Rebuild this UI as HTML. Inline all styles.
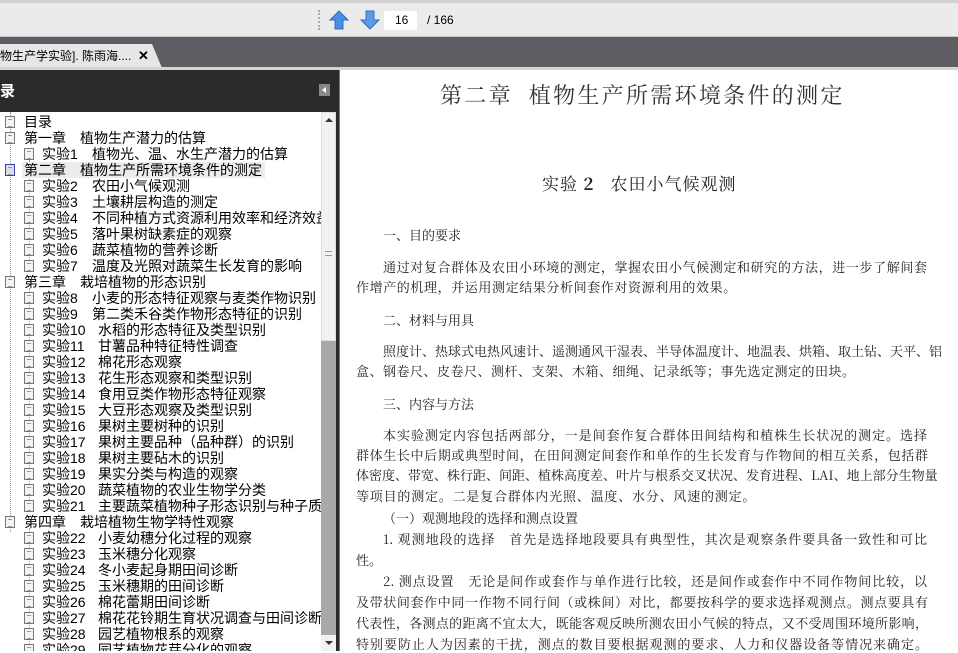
<!DOCTYPE html>
<html><head><meta charset="utf-8"><style>
*{margin:0;padding:0;box-sizing:border-box}
body{width:958px;height:651px;overflow:hidden;position:relative;background:#fff;font-family:"Liberation Sans","Noto Sans CJK SC",sans-serif}
.abs{position:absolute;white-space:nowrap}
#tb{left:0;top:0;width:958px;height:37px;background:#ebebeb;border-top:3px solid #d0d0d0;border-bottom:1px solid #c8c8c8}
#tabs{left:0;top:37px;width:958px;height:31px;background:#5e5d63}
#tab{left:0;top:44px;width:152px;height:24px;background:#e6e6e6;font-size:12px;line-height:24px;color:#000}
#tabedge{left:152px;top:44px;width:0;height:0;border-left:10px solid #e6e6e6;border-top:24px solid transparent}
#line2{left:0;top:67px;width:958px;height:3px;background:#d4d4d4}
#ph{left:0;top:70px;width:339px;height:42px;background:#2b2b2b}
#tree{left:0;top:112px;width:321px;height:539px;background:#fff;overflow:hidden}
.r{position:absolute;left:0;width:321px;height:16px;font-size:14px;line-height:16px;color:#000;white-space:nowrap}
.r span{position:absolute;top:0}
.ic{position:absolute;width:10px;height:12px;border:1px solid #777;background:#f4f4f4}
.ic::after{content:"";position:absolute;left:2px;top:2px;width:4px;height:6px;border-top:1px solid #999;border-bottom:1px solid #999}
.dl{position:absolute;border-left:1px dotted #999;}
#sb{left:321px;top:112px;width:15px;height:539px;background:#a9a9a9}
#doc{left:339px;top:70px;width:619px;height:581px;background:#fff;border-left:1px solid #777}
.p{position:absolute;font-family:"Noto Serif CJK SC","Liberation Serif",serif;font-size:13px;color:#222;white-space:nowrap;line-height:16px}
.j{text-align:justify;text-align-last:justify;width:572px;left:356px}
</style></head><body>
<div id="tb" class="abs"></div>
<div class="abs" style="left:318px;top:10px;width:2px;height:20px;border-left:2px dotted #aaa"></div>
<svg class="abs" style="left:328px;top:9px" width="22" height="22" viewBox="0 0 22 22"><path d="M11 2 L20 11 L15 11 L15 20 L7 20 L7 11 L2 11 Z" fill="#4a8fe6" stroke="#2f6cc0"/></svg>
<svg class="abs" style="left:359px;top:9px" width="22" height="22" viewBox="0 0 22 22"><path d="M11 20 L20 11 L15 11 L15 2 L7 2 L7 11 L2 11 Z" fill="#5b9ae8" stroke="#2f6cc0"/></svg>
<div class="abs" style="left:384px;top:11px;width:33px;height:19px;background:#fff;font-size:12px;line-height:19px;padding-left:11px">16</div>
<div class="abs" style="left:427px;top:11px;font-size:12px;line-height:19px">/ 166</div>
<div id="tabs" class="abs"></div>
<div id="tab" class="abs">物生产学实验]. 陈雨海....<span class="abs" style="left:138px;top:0;font-size:13px;font-weight:bold">✕</span></div>
<div id="tabedge" class="abs"></div>
<div id="line2" class="abs"></div>
<div id="ph" class="abs"><span class="abs" style="left:0;top:10px;color:#fff;font-size:15px;font-weight:bold">录</span>
<div class="abs" style="left:319px;top:14px;width:11px;height:12px;background:#888"><div class="abs" style="left:3px;top:3px;border-right:4px solid #fff;border-top:3px solid transparent;border-bottom:3px solid transparent"></div></div></div>
<div id="tree" class="abs">
<div class="dl" style="left:10px;top:0;height:420px"></div>
<div class="dl" style="left:29px;top:48px;height:108px"></div>
<div class="dl" style="left:29px;top:176px;height:220px"></div>
<div class="dl" style="left:29px;top:416px;height:130px"></div>
<div class="abs" style="left:22px;top:50px;width:243px;height:16px;background:#ececec"></div>
<div class="r" style="top:2px"><span style="left:24px">目录</span></div>
<div class="r" style="top:18px"><span style="left:24px">第一章</span><span style="left:80px">植物生产潜力的估算</span></div>
<div class="r" style="top:34px"><span style="left:42px">实验1</span><span style="left:92px">植物光、温、水生产潜力的估算</span></div>
<div class="r" style="top:50px"><span style="left:24px">第二章</span><span style="left:80px">植物生产所需环境条件的测定</span></div>
<div class="r" style="top:66px"><span style="left:42px">实验2</span><span style="left:92px">农田小气候观测</span></div>
<div class="r" style="top:82px"><span style="left:42px">实验3</span><span style="left:92px">土壤耕层构造的测定</span></div>
<div class="r" style="top:98px"><span style="left:42px">实验4</span><span style="left:92px">不同种植方式资源利用效率和经济效益</span></div>
<div class="r" style="top:114px"><span style="left:42px">实验5</span><span style="left:92px">落叶果树缺素症的观察</span></div>
<div class="r" style="top:130px"><span style="left:42px">实验6</span><span style="left:92px">蔬菜植物的营养诊断</span></div>
<div class="r" style="top:146px"><span style="left:42px">实验7</span><span style="left:92px">温度及光照对蔬菜生长发育的影响</span></div>
<div class="r" style="top:162px"><span style="left:24px">第三章</span><span style="left:80px">栽培植物的形态识别</span></div>
<div class="r" style="top:178px"><span style="left:42px">实验8</span><span style="left:92px">小麦的形态特征观察与麦类作物识别</span></div>
<div class="r" style="top:194px"><span style="left:42px">实验9</span><span style="left:92px">第二类禾谷类作物形态特征的识别</span></div>
<div class="r" style="top:210px"><span style="left:42px">实验10</span><span style="left:98px">水稻的形态特征及类型识别</span></div>
<div class="r" style="top:226px"><span style="left:42px">实验11</span><span style="left:98px">甘薯品种特征特性调查</span></div>
<div class="r" style="top:242px"><span style="left:42px">实验12</span><span style="left:98px">棉花形态观察</span></div>
<div class="r" style="top:258px"><span style="left:42px">实验13</span><span style="left:98px">花生形态观察和类型识别</span></div>
<div class="r" style="top:274px"><span style="left:42px">实验14</span><span style="left:98px">食用豆类作物形态特征观察</span></div>
<div class="r" style="top:290px"><span style="left:42px">实验15</span><span style="left:98px">大豆形态观察及类型识别</span></div>
<div class="r" style="top:306px"><span style="left:42px">实验16</span><span style="left:98px">果树主要树种的识别</span></div>
<div class="r" style="top:322px"><span style="left:42px">实验17</span><span style="left:98px">果树主要品种（品种群）的识别</span></div>
<div class="r" style="top:338px"><span style="left:42px">实验18</span><span style="left:98px">果树主要砧木的识别</span></div>
<div class="r" style="top:354px"><span style="left:42px">实验19</span><span style="left:98px">果实分类与构造的观察</span></div>
<div class="r" style="top:370px"><span style="left:42px">实验20</span><span style="left:98px">蔬菜植物的农业生物学分类</span></div>
<div class="r" style="top:386px"><span style="left:42px">实验21</span><span style="left:98px">主要蔬菜植物种子形态识别与种子质量</span></div>
<div class="r" style="top:402px"><span style="left:24px">第四章</span><span style="left:80px">栽培植物生物学特性观察</span></div>
<div class="r" style="top:418px"><span style="left:42px">实验22</span><span style="left:98px">小麦幼穗分化过程的观察</span></div>
<div class="r" style="top:434px"><span style="left:42px">实验23</span><span style="left:98px">玉米穗分化观察</span></div>
<div class="r" style="top:450px"><span style="left:42px">实验24</span><span style="left:98px">冬小麦起身期田间诊断</span></div>
<div class="r" style="top:466px"><span style="left:42px">实验25</span><span style="left:98px">玉米穗期的田间诊断</span></div>
<div class="r" style="top:482px"><span style="left:42px">实验26</span><span style="left:98px">棉花蕾期田间诊断</span></div>
<div class="r" style="top:498px"><span style="left:42px">实验27</span><span style="left:98px">棉花花铃期生育状况调查与田间诊断</span></div>
<div class="r" style="top:514px"><span style="left:42px">实验28</span><span style="left:98px">园艺植物根系的观察</span></div>
<div class="r" style="top:530px"><span style="left:42px">实验29</span><span style="left:98px">园艺植物花芽分化的观察</span></div>
<div class="ic" style="left:5px;top:4px"></div>
<div class="ic" style="left:5px;top:20px"></div>
<div class="ic" style="left:5px;top:52px;border-color:#3344aa;background:#dde"></div>
<div class="ic" style="left:5px;top:164px"></div>
<div class="ic" style="left:5px;top:404px"></div>
<div class="ic" style="left:24px;top:36px"></div>
<div class="ic" style="left:24px;top:68px"></div><div class="ic" style="left:24px;top:84px"></div><div class="ic" style="left:24px;top:100px"></div><div class="ic" style="left:24px;top:116px"></div><div class="ic" style="left:24px;top:132px"></div><div class="ic" style="left:24px;top:148px"></div>
<div class="ic" style="left:24px;top:180px"></div><div class="ic" style="left:24px;top:196px"></div><div class="ic" style="left:24px;top:212px"></div><div class="ic" style="left:24px;top:228px"></div><div class="ic" style="left:24px;top:244px"></div><div class="ic" style="left:24px;top:260px"></div><div class="ic" style="left:24px;top:276px"></div><div class="ic" style="left:24px;top:292px"></div><div class="ic" style="left:24px;top:308px"></div><div class="ic" style="left:24px;top:324px"></div><div class="ic" style="left:24px;top:340px"></div><div class="ic" style="left:24px;top:356px"></div><div class="ic" style="left:24px;top:372px"></div><div class="ic" style="left:24px;top:388px"></div>
<div class="ic" style="left:24px;top:420px"></div><div class="ic" style="left:24px;top:436px"></div><div class="ic" style="left:24px;top:452px"></div><div class="ic" style="left:24px;top:468px"></div><div class="ic" style="left:24px;top:484px"></div><div class="ic" style="left:24px;top:500px"></div><div class="ic" style="left:24px;top:516px"></div><div class="ic" style="left:24px;top:532px"></div>
</div>
<div id="sb" class="abs">
<div class="abs" style="left:0;top:0;width:15px;height:229px;background:#f2f2f2;border:1px solid #ddd"></div>
<div class="abs" style="left:4px;top:6px;border-bottom:4px solid #333;border-left:4px solid transparent;border-right:4px solid transparent"></div>
<div class="abs" style="left:4px;top:139px;width:7px;height:5px;border-top:1px solid #999;border-bottom:1px solid #999"></div>
<div class="abs" style="left:0;top:523px;width:15px;height:16px;background:#f2f2f2"></div>
<div class="abs" style="left:4px;top:529px;border-top:4px solid #333;border-left:4px solid transparent;border-right:4px solid transparent"></div>
</div>
<div class="abs" style="left:336px;top:70px;width:3px;height:581px;background:#2b2b2b"></div>
<div id="doc" class="abs"></div>
<div class="p" style="left:440px;top:82px;font-size:22px;line-height:26px;letter-spacing:2.3px;color:#333">第二章&nbsp;&nbsp;植物生产所需环境条件的测定</div>
<div class="p" style="left:542px;top:172px;font-size:17px;line-height:22px;letter-spacing:1px">实验 <b>2</b>&nbsp;&nbsp;&nbsp;农田小气候观测</div>
<div class="p" style="left:383px;top:227px">一、目的要求</div>
<div class="p j" style="left:383px;width:544px;top:259px">通过对复合群体及农田小环境的测定，掌握农田小气候测定和研究的方法，进一步了解间套</div>
<div class="p" style="left:356px;top:279px;letter-spacing:0.6px">作增产的机理，并运用测定结果分析间套作对资源利用的效果。</div>
<div class="p" style="left:383px;top:312px">二、材料与用具</div>
<div class="p j" style="left:383px;width:544px;top:343px">照度计、热球式电热风速计、遥测通风干湿表、半导体温度计、地温表、烘箱、取土钻、天平、铝</div>
<div class="p" style="left:356px;top:363px;letter-spacing:0.5px">盒、钢卷尺、皮卷尺、测杆、支架、木箱、细绳、记录纸等；事先选定测定的田块。</div>
<div class="p" style="left:383px;top:396px">三、内容与方法</div>
<div class="p j" style="left:383px;width:544px;top:427px">本实验测定内容包括两部分，一是间套作复合群体田间结构和植株生长状况的测定。选择</div>
<div class="p j" style="top:447px">群体生长中后期或典型时间，在田间测定间套作和单作的生长发育与作物间的相互关系，包括群</div>
<div class="p j" style="top:467px">体密度、带宽、株行距、间距、植株高度差、叶片与根系交叉状况、发育进程、LAI、地上部分生物量</div>
<div class="p" style="left:356px;top:488px;letter-spacing:0.8px">等项目的测定。二是复合群体内光照、温度、水分、风速的测定。</div>
<div class="p" style="left:383px;top:510px">（一）观测地段的选择和测点设置</div>
<div class="p j" style="left:383px;width:544px;top:531px">1. 观测地段的选择　首先是选择地段要具有典型性，其次是观察条件要具备一致性和可比</div>
<div class="p" style="left:356px;top:552px">性。</div>
<div class="p j" style="left:383px;width:544px;top:573px">2. 测点设置　无论是间作或套作与单作进行比较，还是间作或套作中不同作物间比较，以</div>
<div class="p j" style="top:594px">及带状间套作中同一作物不同行间（或株间）对比，都要按科学的要求选择观测点。测点要具有</div>
<div class="p j" style="top:615px">代表性，各测点的距离不宜太大，既能客观反映所测农田小气候的特点，又不受周围环境所影响，</div>
<div class="p j" style="top:636px">特别要防止人为因素的干扰，测点的数目要根据观测的要求、人力和仪器设备等情况来确定。</div>
</body></html>
